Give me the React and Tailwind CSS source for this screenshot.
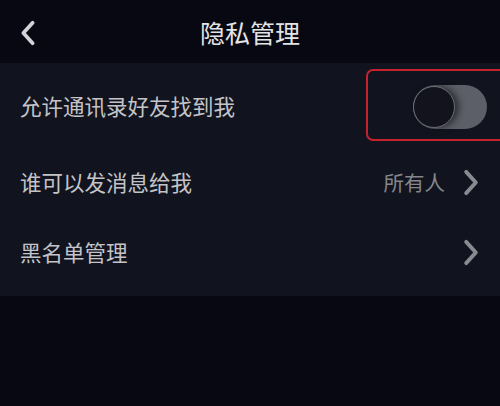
import React from "react";

const font = { fontFamily: '"Noto Sans CJK SC", "Noto Sans", sans-serif' };

function Chevron({ className }) {
  return (
    <svg viewBox="0 0 18 28" className={className} fill="none">
      <path d="M4 3 L14 14 L4 25" stroke="currentColor" strokeWidth="4" strokeLinecap="round" strokeLinejoin="round" />
    </svg>
  );
}

export default function App() {
  return (
    <div className="w-[500px] h-[406px] bg-[#070812] flex flex-col overflow-hidden" style={font}>
      <div className="h-[63px] flex items-center relative shrink-0">
        <svg viewBox="0 0 18 28" className="absolute left-[19px] top-[20px] w-[18px] h-[26px] text-[#d4d4d8]" fill="none">
          <path d="M14 3 L4 14 L14 25" stroke="currentColor" strokeWidth="4" strokeLinecap="round" strokeLinejoin="round" />
        </svg>
        <div className="flex-1 text-center text-[25px] text-[#e4e4e6] leading-none pt-[2px]">隐私管理</div>
      </div>
      <div className="bg-[#11141f] h-[233px] flex flex-col shrink-0">
        <div className="h-[84px] flex items-center pl-[20px] pr-[13px] relative">
          <span className="text-[21.5px] text-[#c4c4c8] leading-none flex-1 pt-[2px]">允许通讯录好友找到我</span>
          <div className="w-[74px] h-[44px] rounded-full bg-[#5c5e68] relative mt-[4px]">
            <div className="absolute left-0 top-[1px] w-[42px] h-[42px] rounded-full bg-[#12131d] border border-[#6a6c76] shadow-[4px_0_6px_rgba(0,0,0,0.5)]"></div>
          </div>
          <div className="absolute left-[366px] top-[6px] w-[140px] h-[72px] border-2 border-[#c5222e] rounded-[7px]"></div>
        </div>
        <div className="h-[70px] flex items-center pl-[20px] pr-[20px]">
          <span className="text-[21.5px] text-[#c4c4c8] leading-none flex-1">谁可以发消息给我</span>
          <span className="text-[20.5px] text-[#85868c] leading-none mr-[17px]">所有人</span>
          <Chevron className="w-[18px] h-[27px] text-[#8a8b90]" />
        </div>
        <div className="h-[70px] flex items-center pl-[20px] pr-[20px]">
          <span className="text-[21.5px] text-[#c4c4c8] leading-none flex-1">黑名单管理</span>
          <Chevron className="w-[18px] h-[27px] text-[#8a8b90]" />
        </div>
      </div>
      <div className="flex-1 bg-[#070812]"></div>
    </div>
  );
}
